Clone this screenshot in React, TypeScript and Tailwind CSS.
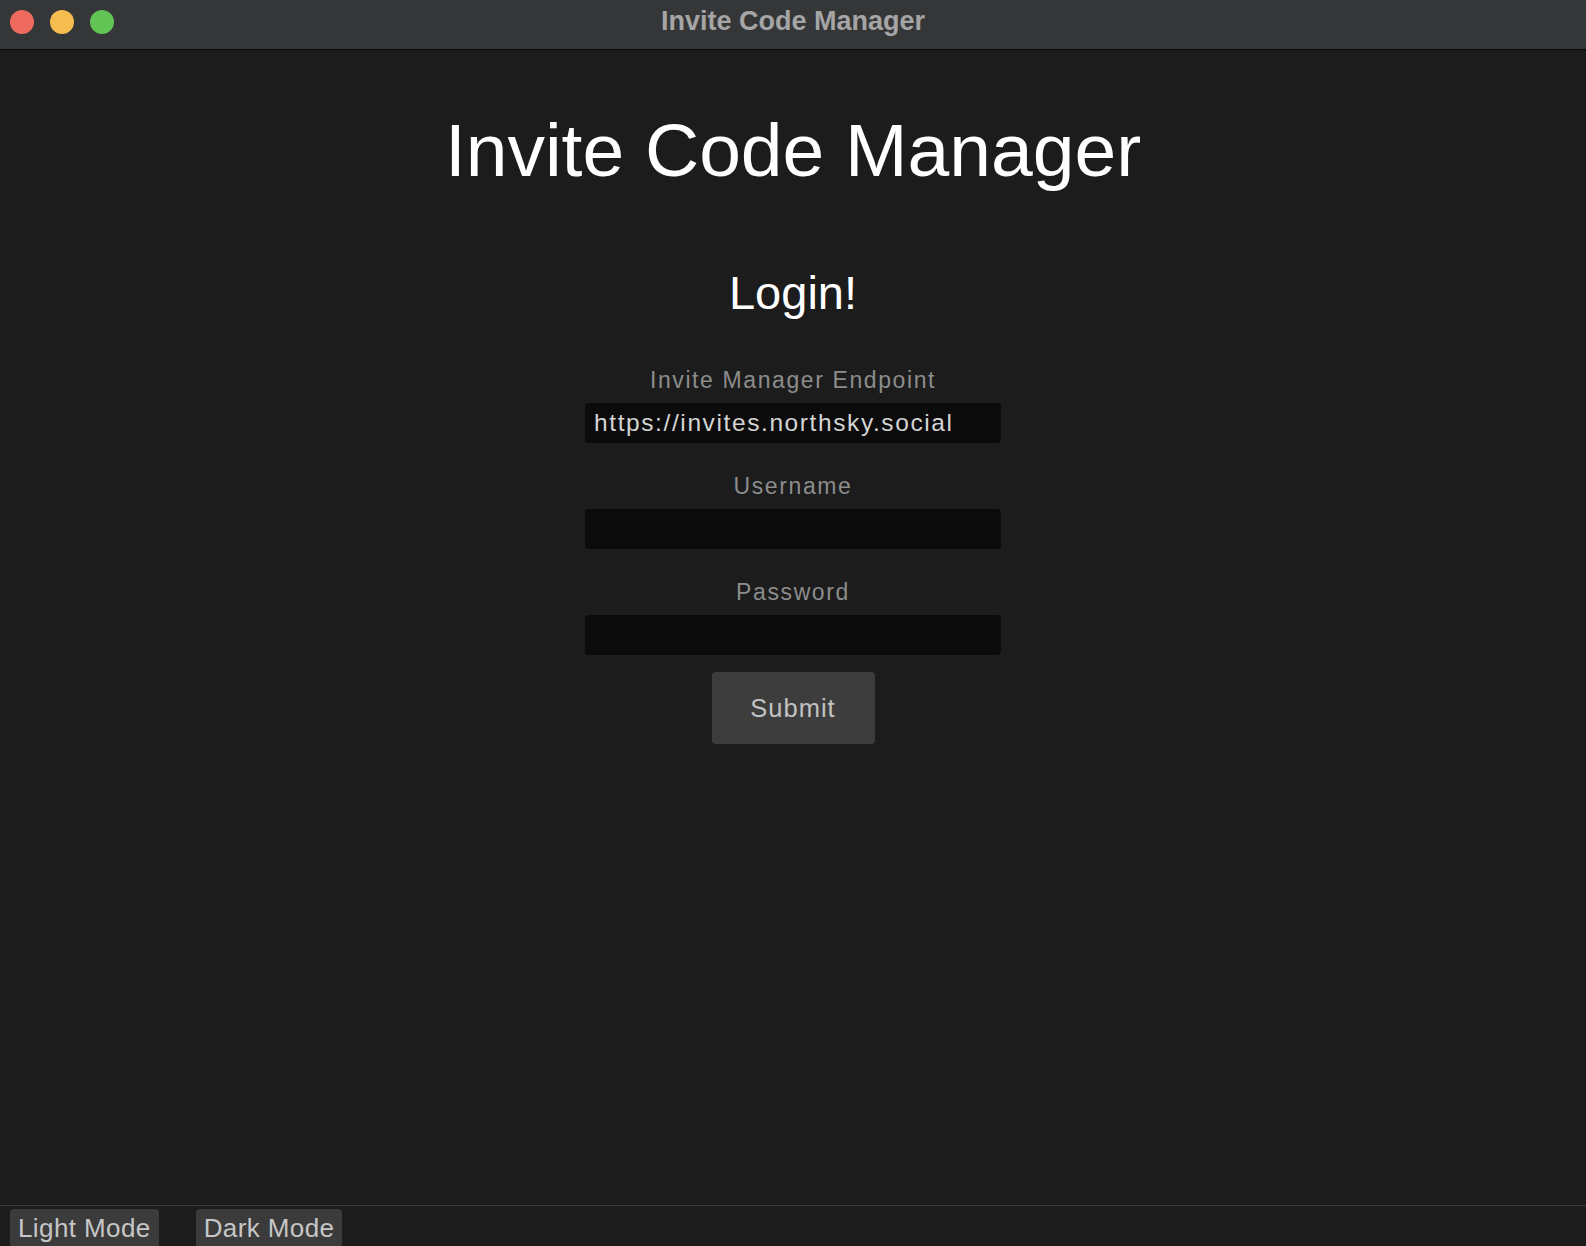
import { useState } from "react";

const font = "font-['Liberation_Sans',Arial,sans-serif]";

const Field = ({
  label,
  type = "text",
  value,
  onChange,
}: {
  label: string;
  type?: string;
  value: string;
  onChange: (v: string) => void;
}) => (
  <div className="flex flex-col items-center">
    <label className="text-[23px] leading-none tracking-[1.6px] text-[#8c8c8c]">{label}</label>
    <input
      type={type}
      value={value}
      onChange={(e) => onChange(e.target.value)}
      className="mt-[11px] h-[40px] w-[416px] rounded-[4px] bg-[#0b0b0b] px-[9px] text-[24.5px] leading-[40px] tracking-[1.6px] text-[#d4d4d4] outline-none"
    />
  </div>
);

export default function App() {
  const [endpoint, setEndpoint] = useState("https://invites.northsky.social");
  const [username, setUsername] = useState("");
  const [password, setPassword] = useState("");

  return (
    <div className={`flex h-screen flex-col overflow-hidden bg-[#1c1c1c] ${font}`}>
      {/* window chrome */}
      <div className="grid h-[50px] shrink-0 grid-cols-[1fr_auto_1fr] border-b border-[#0c0c0c] bg-[#353638]">
        <div className="flex items-start gap-4 pl-[10px] pt-[10px]">
          <span className="h-6 w-6 rounded-full bg-[#ee6a5f]" />
          <span className="h-6 w-6 rounded-full bg-[#f5bd4f]" />
          <span className="h-6 w-6 rounded-full bg-[#61c454]" />
        </div>
        <div className="pt-[8px] text-[27px] font-bold leading-none text-[#a5a5a6]">Invite Code Manager</div>
        <div />
      </div>

      <main className="flex flex-1 flex-col items-center pt-[63px]">
        <h1 className="text-[75px] leading-none text-white">Invite Code Manager</h1>
        <h2 className="mt-[81px] text-[47px] leading-none text-white">Login!</h2>

        <form
          className="mt-[53px] flex flex-col items-center gap-[32px]"
          onSubmit={(e) => e.preventDefault()}
        >
          <Field label="Invite Manager Endpoint" value={endpoint} onChange={setEndpoint} />
          <Field label="Username" value={username} onChange={setUsername} />
          <Field label="Password" type="password" value={password} onChange={setPassword} />
          <button
            type="submit"
            className="-mt-[15px] h-[72px] w-[163px] rounded-[4px] bg-[#3d3d3d] text-[25.5px] tracking-[1px] text-[#c2c2c2]"
          >
            Submit
          </button>
        </form>
      </main>

      <div className="flex h-[41px] shrink-0 items-start gap-[37px] border-t border-[#3c3c3c] pl-[10px] pt-[3px]">
        <button className="h-[40px] rounded-[4px] bg-[#3b3b3b] px-[8px] pb-[2px] text-[26px] leading-none tracking-[0.4px] text-[#c6c6c6]">
          Light Mode
        </button>
        <button className="h-[40px] rounded-[4px] bg-[#3b3b3b] px-[8px] pb-[2px] text-[26px] leading-none tracking-[0.4px] text-[#c6c6c6]">
          Dark Mode
        </button>
      </div>
    </div>
  );
}
